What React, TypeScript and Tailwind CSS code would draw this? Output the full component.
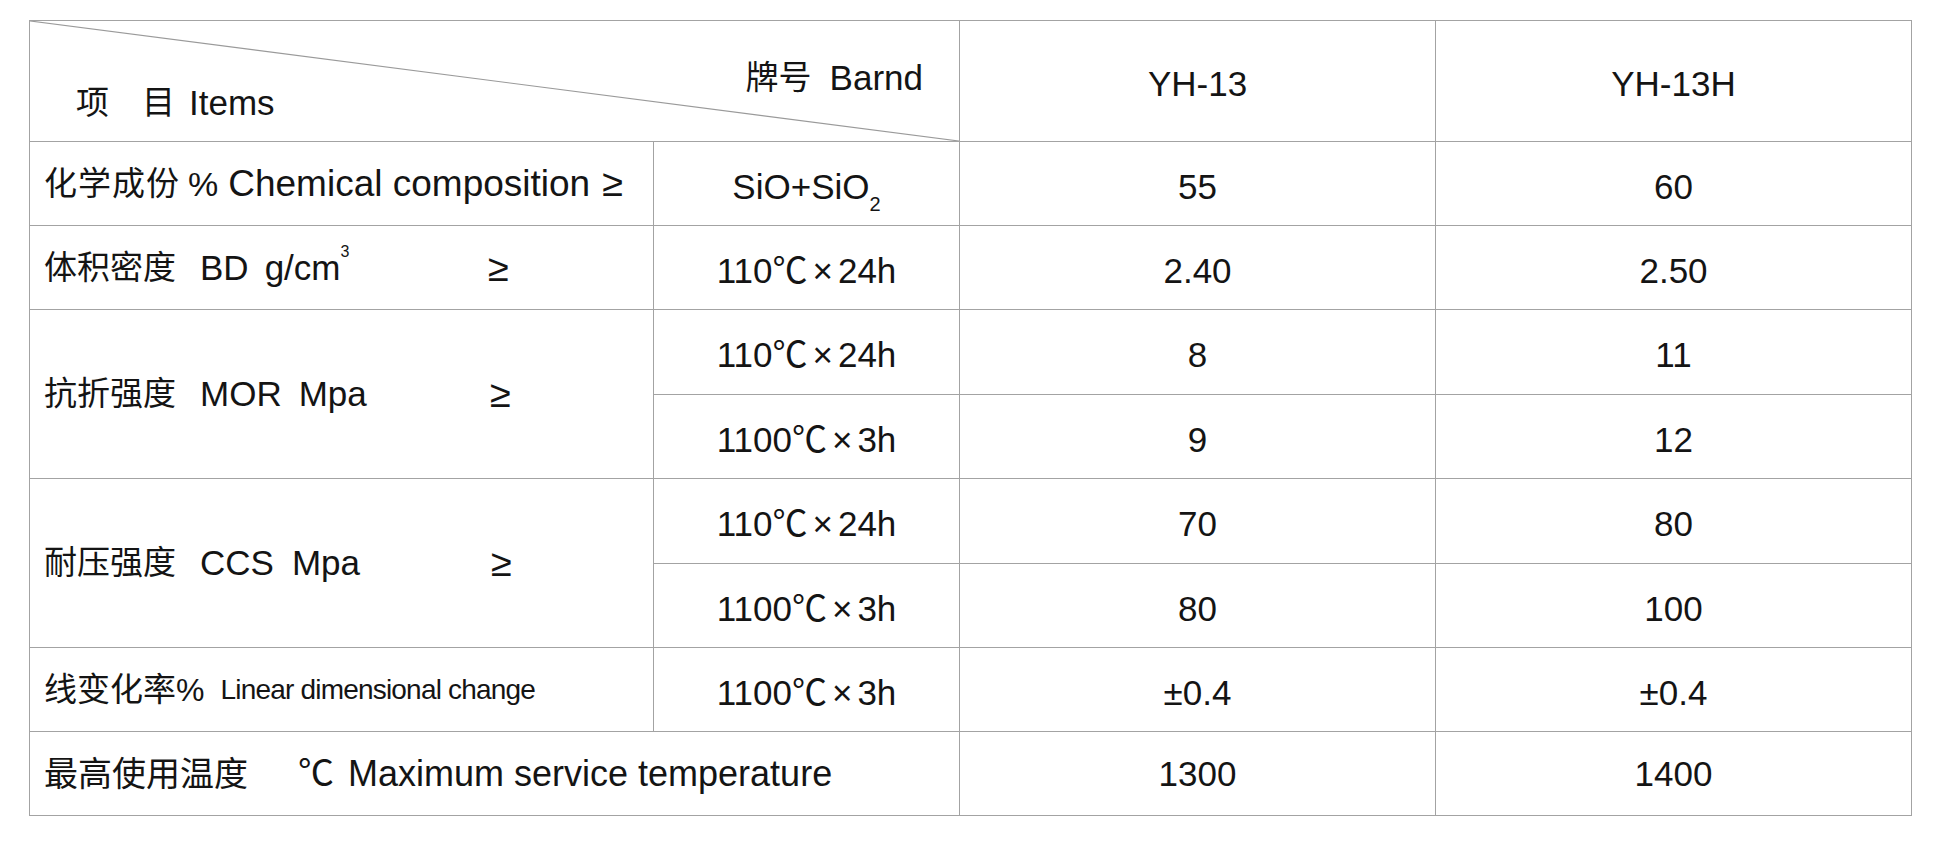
import React from 'react';

// one font stack for the whole sheet: latin in Liberation Sans, hanzi fall through to Noto CJK
const FONT = "font-['Liberation_Sans','Noto_Sans_CJK_SC',sans-serif]";

interface CellProps {
  className?: string;
  children?: React.ReactNode;
}

// every cell draws its own right + bottom rule, the grid draws top + left
const Cell: React.FC<CellProps> = ({ className = '', children }) => (
  <div className={`flex items-center border-r border-b border-[#a3a3a3] ${className}`}>
    {children}
  </div>
);

const Value: React.FC<CellProps> = ({ children }) => (
  <Cell className="justify-center pt-[6px] text-[35px] leading-[40px]">{children}</Cell>
);

const Hz: React.FC<CellProps> = ({ className = '', children }) => (
  <span className={`text-[33px] ${className}`}>{children}</span>
);

const Ge: React.FC = () => <span className="text-[38px] leading-[40px]">≥</span>;

// "110℃×24h" with a little air round the times sign, as in the print
const Cond: React.FC<{ t: string; h: string }> = ({ t, h }) => (
  <span>
    {t}℃<span className="mx-[5px]">×</span>
    {h}
  </span>
);

const MOR = [
  { t: '110', h: '24h', a: '8', b: '11' },
  { t: '1100', h: '3h', a: '9', b: '12' },
];

const CCS = [
  { t: '110', h: '24h', a: '70', b: '80' },
  { t: '1100', h: '3h', a: '80', b: '100' },
];

export default function App() {
  return (
    <div className={`min-h-screen bg-white pl-[29px] pt-[20px] text-[#141414] ${FONT}`}>
      <div className="grid w-max grid-cols-[624px_306px_476px_476px] grid-rows-[121px_84px_84px_85px_84px_85px_84px_84px_84px] border-l border-t border-[#a3a3a3]">
        {/* Header with the diagonal split */}
        <Cell className="relative col-span-2 flex-col !items-stretch pt-[42px]">
          <svg className="absolute inset-0 h-full w-full" aria-hidden>
            <line x1="0" y1="0" x2="100%" y2="100%" stroke="#9a9a9a" strokeWidth="1.2" />
          </svg>
          <div className="flex items-center justify-end pr-[36px] text-[35px] leading-[30px]">
            <Hz className="text-[32px]">牌号</Hz>
            <span className="ml-[18px]">Barnd</span>
          </div>
          <div className="-mt-[5px] flex items-center pl-[46px] text-[35px] leading-[30px]">
            <Hz className="text-[32px]">项</Hz>
            <Hz className="ml-[33px] text-[32px]">目</Hz>
            <span className="ml-[14px]">Items</span>
          </div>
        </Cell>
        <Value>YH-13</Value>
        <Value>YH-13H</Value>

        {/* Chemical composition */}
        <Cell className="pl-[14px] text-[37px] leading-[42px]">
          <Hz className="tracking-[1px]">化学成份</Hz>
          <span className="ml-[8px] text-[34px]">%</span>
          <span className="ml-[10px]">Chemical composition</span>
          <span className="ml-[12px]"><Ge /></span>
        </Cell>
        <Value>
          <span>
            SiO+SiO<sub className="align-[-0.35em] text-[20px]">2</sub>
          </span>
        </Value>
        <Value>55</Value>
        <Value>60</Value>

        {/* Bulk density */}
        <Cell className="pl-[14px] text-[35px] leading-[40px]">
          <div className="flex w-[444px] items-center">
            <Hz>体积密度</Hz>
            <span className="ml-[24px]">BD</span>
            <span className="ml-[16px]">
              g/cm<sup className="align-[0.9em] text-[16px]">3</sup>
            </span>
          </div>
          <Ge />
        </Cell>
        <Value><Cond t="110" h="24h" /></Value>
        <Value>2.40</Value>
        <Value>2.50</Value>

        {/* MOR */}
        <Cell className="row-span-2 pl-[14px] text-[35px] leading-[40px]">
          <div className="flex w-[446px] items-center">
            <Hz>抗折强度</Hz>
            <span className="ml-[24px]">MOR</span>
            <span className="ml-[17px]">Mpa</span>
          </div>
          <Ge />
        </Cell>
        {MOR.map((r) => (
          <React.Fragment key={r.t}>
            <Value><Cond t={r.t} h={r.h} /></Value>
            <Value>{r.a}</Value>
            <Value>{r.b}</Value>
          </React.Fragment>
        ))}

        {/* CCS */}
        <Cell className="row-span-2 pl-[14px] text-[35px] leading-[40px]">
          <div className="flex w-[447px] items-center">
            <Hz>耐压强度</Hz>
            <span className="ml-[24px]">CCS</span>
            <span className="ml-[18px]">Mpa</span>
          </div>
          <Ge />
        </Cell>
        {CCS.map((r) => (
          <React.Fragment key={r.t}>
            <Value><Cond t={r.t} h={r.h} /></Value>
            <Value>{r.a}</Value>
            <Value>{r.b}</Value>
          </React.Fragment>
        ))}

        {/* Linear change */}
        <Cell className="pl-[14px] leading-[40px]">
          <Hz className="text-[32px]">线变化率</Hz>
          <span className="text-[32px]">%</span>
          <span className="ml-[16px] text-[28px] tracking-[-0.8px]">Linear dimensional change</span>
        </Cell>
        <Value><Cond t="1100" h="3h" /></Value>
        <Value>±0.4</Value>
        <Value>±0.4</Value>

        {/* Max service temperature */}
        <Cell className="col-span-2 pl-[14px] text-[36px] leading-[40px]">
          <Hz className="text-[34px]">最高使用温度</Hz>
          <span className="ml-[50px]">℃</span>
          <span className="ml-[14px]">Maximum service temperature</span>
        </Cell>
        <Cell className="justify-center text-[35px] leading-[40px]">1300</Cell>
        <Cell className="justify-center text-[35px] leading-[40px]">1400</Cell>
      </div>
    </div>
  );
}
